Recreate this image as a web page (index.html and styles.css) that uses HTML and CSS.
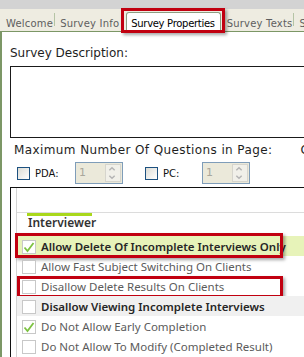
FILE: index.html
```html
<!DOCTYPE html>
<html lang="en">
<head>
    <meta charset="UTF-8">
    <title>Survey Properties</title>
    <link rel="stylesheet" href="styles.css">
</head>
<body>
    <div class="topbar"></div>
    <div class="tabs">
        <span class="tab">Welcome</span>
        <span class="sep"></span>
        <span class="tab">Survey Info</span>
        <span class="tab active">Survey Properties</span>
        <span class="tab">Survey Texts</span>
        <span class="sep"></span>
        <span class="tab">Settings</span>
    </div>

    <div class="panel">
        <div class="label">Survey Description:</div>
        <div class="desc"></div>

        <div class="max-row">
            <span>Maximum Number Of Questions in Page:</span>
            <span class="next">Close</span>
        </div>

        <div class="limits">
            <div class="opt">
                <span class="xp-box"></span>
                <span>PDA:</span>
            </div>
            <div class="spin">
                <span class="val">1</span>
                <span class="btns">
                    <svg width="12" height="9" viewBox="0 0 12 9"><path d="M3 6 L6 3 L9 6" fill="none" stroke="#b4b4b4" stroke-width="1.6"/></svg>
                    <svg width="12" height="9" viewBox="0 0 12 9"><path d="M3 3 L6 6 L9 3" fill="none" stroke="#b4b4b4" stroke-width="1.6"/></svg>
                </span>
            </div>
            <div class="opt second">
                <span class="xp-box"></span>
                <span>PC:</span>
            </div>
            <div class="spin">
                <span class="val">1</span>
                <span class="btns">
                    <svg width="12" height="9" viewBox="0 0 12 9"><path d="M3 6 L6 3 L9 6" fill="none" stroke="#b4b4b4" stroke-width="1.6"/></svg>
                    <svg width="12" height="9" viewBox="0 0 12 9"><path d="M3 3 L6 6 L9 3" fill="none" stroke="#b4b4b4" stroke-width="1.6"/></svg>
                </span>
            </div>
        </div>

        <div class="listbox">
            <div class="inner">
                <div class="list-head"></div>
                <div class="group-bar"></div>
                <div class="group-title">Interviewer</div>

                <div class="item selected marked">
                    <span class="box"><svg width="12" height="12" viewBox="0 0 12 12"><polyline points="1.5,6.5 4.5,10 10.5,2" fill="none" stroke="#7dc242" stroke-width="1.8"/></svg></span>
                    <span>Allow Delete Of Incomplete Interviews Only</span>
                </div>
                <div class="item">
                    <span class="box"></span>
                    <span>Allow Fast Subject Switching On Clients</span>
                </div>
                <div class="item marked-2">
                    <span class="box"></span>
                    <span>Disallow Delete Results On Clients</span>
                </div>
                <div class="item hover">
                    <span class="box"></span>
                    <span>Disallow Viewing Incomplete Interviews</span>
                </div>
                <div class="item">
                    <span class="box"><svg width="12" height="12" viewBox="0 0 12 12"><polyline points="1.5,6.5 4.5,10 10.5,2" fill="none" stroke="#7dc242" stroke-width="1.8"/></svg></span>
                    <span>Do Not Allow Early Completion</span>
                </div>
                <div class="item">
                    <span class="box"></span>
                    <span>Do Not Allow To Modify (Completed Result)</span>
                </div>
            </div>
        </div>
    </div>
</body>
</html>
```

FILE: styles.css
```css
body {
    margin: 0;
    width: 304px;
    height: 357px;
    overflow: hidden;
    background: #fff;
    font-family: "DejaVu Sans", sans-serif;
}

/* tab strip */
.topbar {
    height: 9px;
    background: #d3d3d3;
}
.tabs {
    display: flex;
    align-items: flex-end;
    height: 22px;
    padding-left: 6px;
    background: #eeece1;
    border-bottom: 1px solid #7c9766;
    font-size: 10px;
    color: #5e5e5e;
    white-space: nowrap;
}
.tab {
    line-height: 13px;
    margin-bottom: 1px;
    letter-spacing: 0.2px;
}
.sep {
    width: 1px;
    height: 13px;
    margin: 0 5px 5px 1px;
    background: #6d8d50;
    border-right: 1px solid #b5c4a5;
}
.tab.active {
    position: relative;
    margin: 0 6px -1px 7px;
    padding: 4px 5px 2px 4px;
    background: #fff;
    color: #000;
    letter-spacing: -0.3px;
    border: 1px solid #8d9d81;
    border-bottom: none;
    border-radius: 3px 3px 0 0;
}
.tab.active::after {
    content: "";
    position: absolute;
    left: -6px;
    top: -5px;
    right: -5px;
    bottom: -1px;
    border: 3px solid #c10010;
    box-shadow: 2px 2px 3px rgba(0, 0, 0, 0.35);
}

/* page */
.panel {
    height: 400px;
    border-left: 2px solid #7c9766;
    padding-left: 8px;
    color: #1e1e1e;
    font-size: 12px;
}
.label {
    line-height: 15px;
    padding-top: 14px;
}
.desc {
    width: 320px;
    height: 70px;
    margin-top: 5px;
    border: 1px solid #1a1a1a;
}
.max-row {
    display: flex;
    margin: 5px 0 0 4px;
    line-height: 15px;
    letter-spacing: 0.4px;
    white-space: nowrap;
}
.max-row .next {
    margin-left: 28px;
}

.limits {
    display: flex;
    align-items: center;
    height: 22px;
    margin-top: 4px;
    font-size: 10px;
    color: #111;
}
.opt {
    display: flex;
    align-items: center;
    gap: 5px;
    width: 58px;
    margin-left: 7px;
}
.opt.second {
    width: 57px;
    margin-left: 22px;
}
.xp-box {
    width: 11px;
    height: 11px;
    border: 1px solid #1d5180;
    background: linear-gradient(135deg, #dcdcd5, #fff);
}
.spin {
    display: flex;
    justify-content: space-between;
    width: 46px;
    height: 20px;
    border: 1px solid #7f9db9;
    background: #ebe9da;
}
.spin .val {
    padding: 3px 0 0 3px;
    font-size: 11px;
    color: #a9a79c;
}
.spin .btns {
    display: flex;
    flex-direction: column;
    justify-content: center;
    width: 14px;
    margin: 1px;
    background: #f1f0e9;
    border: 1px solid #d6d5cd;
}

/* option list */
.listbox {
    width: 320px;
    height: 200px;
    margin-top: 3px;
    padding-left: 5px;
    border: 1px solid #111;
    font-family: "Noto Sans", sans-serif;
    font-size: 11.5px;
}
.inner {
    height: 100%;
    border-left: 1px solid #d4d4d4;
}
.list-head {
    height: 24px;
    border-bottom: 1px solid #dcdcdc;
}
.group-bar {
    width: 65px;
    height: 3px;
    margin-left: 10px;
    background: #a9d81c;
}
.group-title {
    margin: -1px 0 5px 11px;
    line-height: 16px;
    font-size: 12px;
    font-weight: 600;
    color: #333;
}
.item {
    position: relative;
    display: flex;
    align-items: flex-start;
    gap: 5px;
    height: 20px;
    padding-left: 5px;
    color: #5b5b5b;
    white-space: nowrap;
}
.item span:last-child {
    padding-top: 2px;
    line-height: 18px;
}
.item .box {
    display: flex;
    align-items: center;
    justify-content: center;
    box-sizing: border-box;
    width: 14px;
    height: 14px;
    margin-top: 4px;
    border: 1px solid #c8c8c8;
    background: #fff;
}
.item.selected {
    background: #e7f3b9;
    color: #262626;
    font-weight: 600;
}
.item.hover {
    background: #f0f0f0;
    color: #262626;
    font-weight: 600;
}
.item.marked::after,
.item.marked-2::after {
    content: "";
    position: absolute;
    left: -2px;
    top: -3px;
    width: 262px;
    height: 19px;
    border: 3px solid #c10010;
    box-shadow: 2px 2px 3px rgba(0, 0, 0, 0.35);
}
.item.marked-2::after {
    left: 0;
    top: 0;
    width: 260px;
    height: 16px;
}
```
